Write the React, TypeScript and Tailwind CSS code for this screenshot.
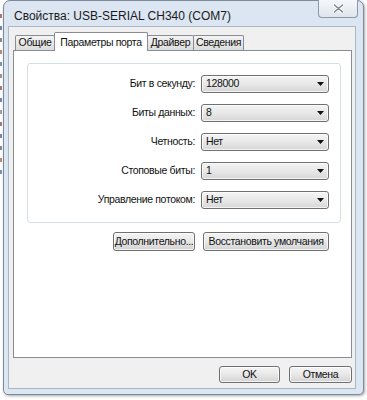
import React from "react"

const rows = [
  ["Бит в секунду:", "128000"],
  ["Биты данных:", "8"],
  ["Четность:", "Нет"],
  ["Стоповые биты:", "1"],
  ["Управление потоком:", "Нет"],
]

// bits of the window behind, peeking out on the left
const behind = ["#8a3b3b", "#3b4f8a", "#555", "#9a5a3b", "#3b6a8a", "#666", "#8a3b3b", "#3b4f8a", "#777", "#8a3b3b", "#3b4f8a", "#555", "#9a5a3b", "#3b6a8a"]

const ui = "text-[10.5px] tracking-[-0.35px] text-[#111] whitespace-nowrap"

function Tab({ label, active, w }: { label: string; active?: boolean; w: string }) {
  if (active) {
    return (
      <div className={`${w} ${ui} h-[19px] -mb-px -ml-px relative z-10 border border-b-0 border-[#898c95] bg-white rounded-t-[2px] flex items-start justify-center pt-[2px]`}>
        {label}
      </div>
    )
  }
  return (
    <div className={`${w} ${ui} h-[15px] -ml-px first:ml-0 border border-b-0 border-[#898c95] bg-gradient-to-b from-[#f4f4f4] to-[#dcdcdc] rounded-t-[2px] flex items-center justify-center`}>
      {label}
    </div>
  )
}

function Btn({ children, w }: { children: React.ReactNode; w: string }) {
  return (
    <div className={`${w} ${ui} h-full border border-[#707070] rounded-[3px] bg-gradient-to-b from-[#f4f4f4] via-[#e8e8e8] to-[#d3d3d3] shadow-[inset_0_0_0_1px_rgba(255,255,255,0.7)] flex items-center justify-center`}>
      {children}
    </div>
  )
}

function Combo({ value }: { value: string }) {
  return (
    <div className={`${ui} ml-[6px] w-[128px] h-[18px] border border-[#707070] rounded-[3px] bg-gradient-to-b from-[#f4f4f4] via-[#e8e8e8] to-[#d6d6d6] shadow-[inset_0_0_0_1px_rgba(255,255,255,0.7)] flex items-center justify-between pl-[4px] pr-[4px]`}>
      <span>{value}</span>
      <svg width="7" height="4" viewBox="0 0 7 4">
        <path d="M0 0H7L3.5 4Z" fill="#111" />
      </svg>
    </div>
  )
}

export default function App() {
  return (
    <div className="w-[367px] h-[400px] bg-white flex font-['Liberation_Sans',Arial,sans-serif]">
      <div className="w-[3px] flex flex-col pt-[14px] gap-[8px]">
        {behind.map((c, i) => (
          <div key={i} className="h-[4px] w-[2px] opacity-70" style={{ backgroundColor: c }} />
        ))}
      </div>

      <div className="w-[361px] h-[395px] border border-[#7d8a99] rounded-t-[7px] rounded-b-[5px] bg-[#dce6f2] shadow-[1px_1px_3px_rgba(0,0,0,0.35)] flex flex-col pl-[4px] pr-[7px] pb-[5px]">
        <div className="h-[25px] flex items-start justify-between -mr-[7px]">
          <div className="pl-[6px] pt-[6px] text-[12px] text-[#1a1a1a] whitespace-nowrap">Свойства: USB-SERIAL CH340 (COM7)</div>
          <div className="-mt-px mr-[5px] w-[40px] h-[18px] border border-t-0 border-[#8d99a8] rounded-b-[4px] bg-gradient-to-b from-[#f5f7fa] to-[#dfe5ec] flex items-center justify-center">
            <svg width="11" height="9" viewBox="0 0 11 9">
              <path d="M1.5 1L9.5 8M9.5 1L1.5 8" stroke="#fff" strokeWidth="3.2" strokeLinecap="round" />
              <path d="M1.5 1L9.5 8M9.5 1L1.5 8" stroke="#808890" strokeWidth="1.6" strokeLinecap="round" />
            </svg>
          </div>
        </div>

        <div className="flex-1 border border-[#a9b6c5] bg-[#f0f0f0] flex flex-col">
          <div className="h-[23px] flex items-end pl-[6px]">
            <Tab label="Общие" w="w-[40px]" />
            <Tab label="Параметры порта" active w="w-[94px]" />
            <Tab label="Драйвер" w="w-[47px]" />
            <Tab label="Сведения" w="w-[51px]" />
          </div>

          <div className="h-[308px] ml-[4px] mr-[3px] border border-[#898c95] bg-white flex flex-col">
            <div className="mt-[12px] ml-[13px] mr-[10px] border border-[#d5dfe5] rounded-[3px] pt-[11px] pb-[13px] flex flex-col gap-[11px]">
              {rows.map(([label, value]) => (
                <div key={label} className="flex items-center">
                  <div className={`${ui} w-[167px] text-right`}>{label}</div>
                  <Combo value={value} />
                </div>
              ))}
            </div>
            <div className="mt-[9px] mr-[22px] h-[19px] flex justify-end gap-[8px]">
              <Btn w="w-[82px]">Дополнительно...</Btn>
              <Btn w="w-[126px]">Восстановить умолчания</Btn>
            </div>
          </div>

          <div className="mt-[8px] mr-[3px] h-[17px] flex justify-end gap-[9px]">
            <Btn w="w-[61px]">OK</Btn>
            <Btn w="w-[63px]">Отмена</Btn>
          </div>
        </div>
      </div>
    </div>
  )
}
